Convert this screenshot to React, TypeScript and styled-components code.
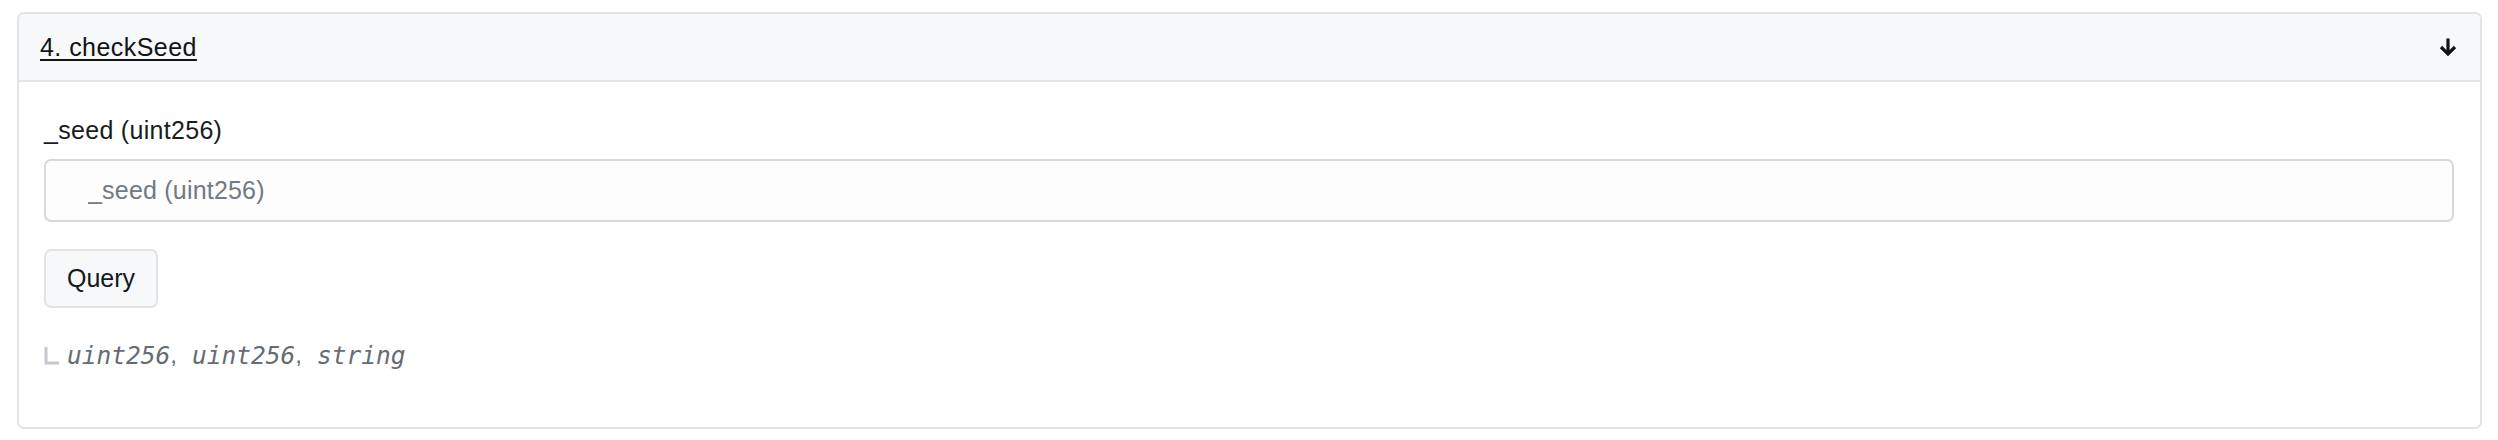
import React from "react";
import styled, { createGlobalStyle } from "styled-components";

const GlobalStyle = createGlobalStyle`
  html, body {
    margin: 0;
    padding: 0;
    background: #ffffff;
  }
  body {
    font-family: "Liberation Sans", Arial, sans-serif;
    color: #1e2022;
  }
`;

const Page = styled.div`
  padding: 12px 16px 14px 17px;
`;

const Card = styled.div`
  border: 2px solid #e1e3e6;
  border-radius: 7px;
  overflow: hidden;
  background: #ffffff;
`;

const CardHeader = styled.div`
  display: flex;
  align-items: center;
  justify-content: space-between;
  height: 68px;
  padding: 0 22px 0 21px;
  background: #f7f8f9;
  border-bottom: 2px solid #e1e3e6;
  box-sizing: border-box;
`;

const Title = styled.a`
  font-size: 25px;
  letter-spacing: 0.45px;
  color: #111315;
  text-decoration: underline;
  text-underline-offset: 3px;
  text-decoration-thickness: 2px;
`;

const ArrowIcon = styled.svg`
  width: 20px;
  height: 20px;
  display: block;
`;

const CardBody = styled.div`
  display: flex;
  flex-direction: column;
  align-items: flex-start;
  padding: 30px 26px 54px 25px;
`;

const Label = styled.label`
  font-size: 25px;
  letter-spacing: 0.3px;
  line-height: 36px;
  color: #1a1c1e;
  margin-bottom: 11px;
`;

const Input = styled.input`
  box-sizing: border-box;
  width: 100%;
  height: 63px;
  padding: 0 16px 0 42px;
  font-family: "Liberation Sans", Arial, sans-serif;
  font-size: 25px;
  letter-spacing: 0.2px;
  color: #1e2022;
  background: #fdfdfe;
  border: 2px solid #d5d8dc;
  border-radius: 7px;
  outline: none;

  &::placeholder {
    color: #727a82;
  }
`;

const QueryButton = styled.button`
  margin-top: 27px;
  box-sizing: border-box;
  height: 59px;
  padding: 0 21px;
  font-family: "Liberation Sans", Arial, sans-serif;
  font-size: 25px;
  color: #16181a;
  background: #f7f8f9;
  border: 2px solid #e1e3e6;
  border-radius: 7px;
`;

const Returns = styled.div`
  display: flex;
  align-items: center;
  margin-top: 29px;
  height: 36px;
  font-size: 24px;
  color: #646c75;
`;

const ElbowIcon = styled.svg`
  width: 16px;
  height: 18px;
  margin-right: 7px;
  margin-top: 2px;
  display: block;
`;

const TypeName = styled.i`
  font-family: "DejaVu Sans Mono", monospace;
  font-style: oblique;
  font-size: 24.5px;
  color: #646c75;
`;

const Separator = styled.span`
  font-family: "Liberation Sans", Arial, sans-serif;
  margin-right: 15px;
`;

const outputs = ["uint256", "uint256", "string"];

export default function App() {
  return (
    <Page>
      <GlobalStyle />
      <Card>
        <CardHeader>
          <Title>4. checkSeed</Title>
          <ArrowIcon viewBox="0 0 20 20" aria-hidden>
            <path
              d="M10 1.5 V17 M3 10 L10 17 L17 10"
              fill="none"
              stroke="#111315"
              strokeWidth="3.2"
              strokeLinejoin="miter"
            />
          </ArrowIcon>
        </CardHeader>
        <CardBody>
          <Label>_seed (uint256)</Label>
          <Input placeholder="_seed (uint256)" />
          <QueryButton>Query</QueryButton>
          <Returns>
            <ElbowIcon viewBox="0 0 16 18" aria-hidden>
              <path d="M2 0 V16 H15" fill="none" stroke="#c3c8cf" strokeWidth="3" />
            </ElbowIcon>
            {outputs.map((t, i) => (
              <React.Fragment key={i}>
                <TypeName>{t}</TypeName>
                {i < outputs.length - 1 && <Separator>,</Separator>}
              </React.Fragment>
            ))}
          </Returns>
        </CardBody>
      </Card>
    </Page>
  );
}
